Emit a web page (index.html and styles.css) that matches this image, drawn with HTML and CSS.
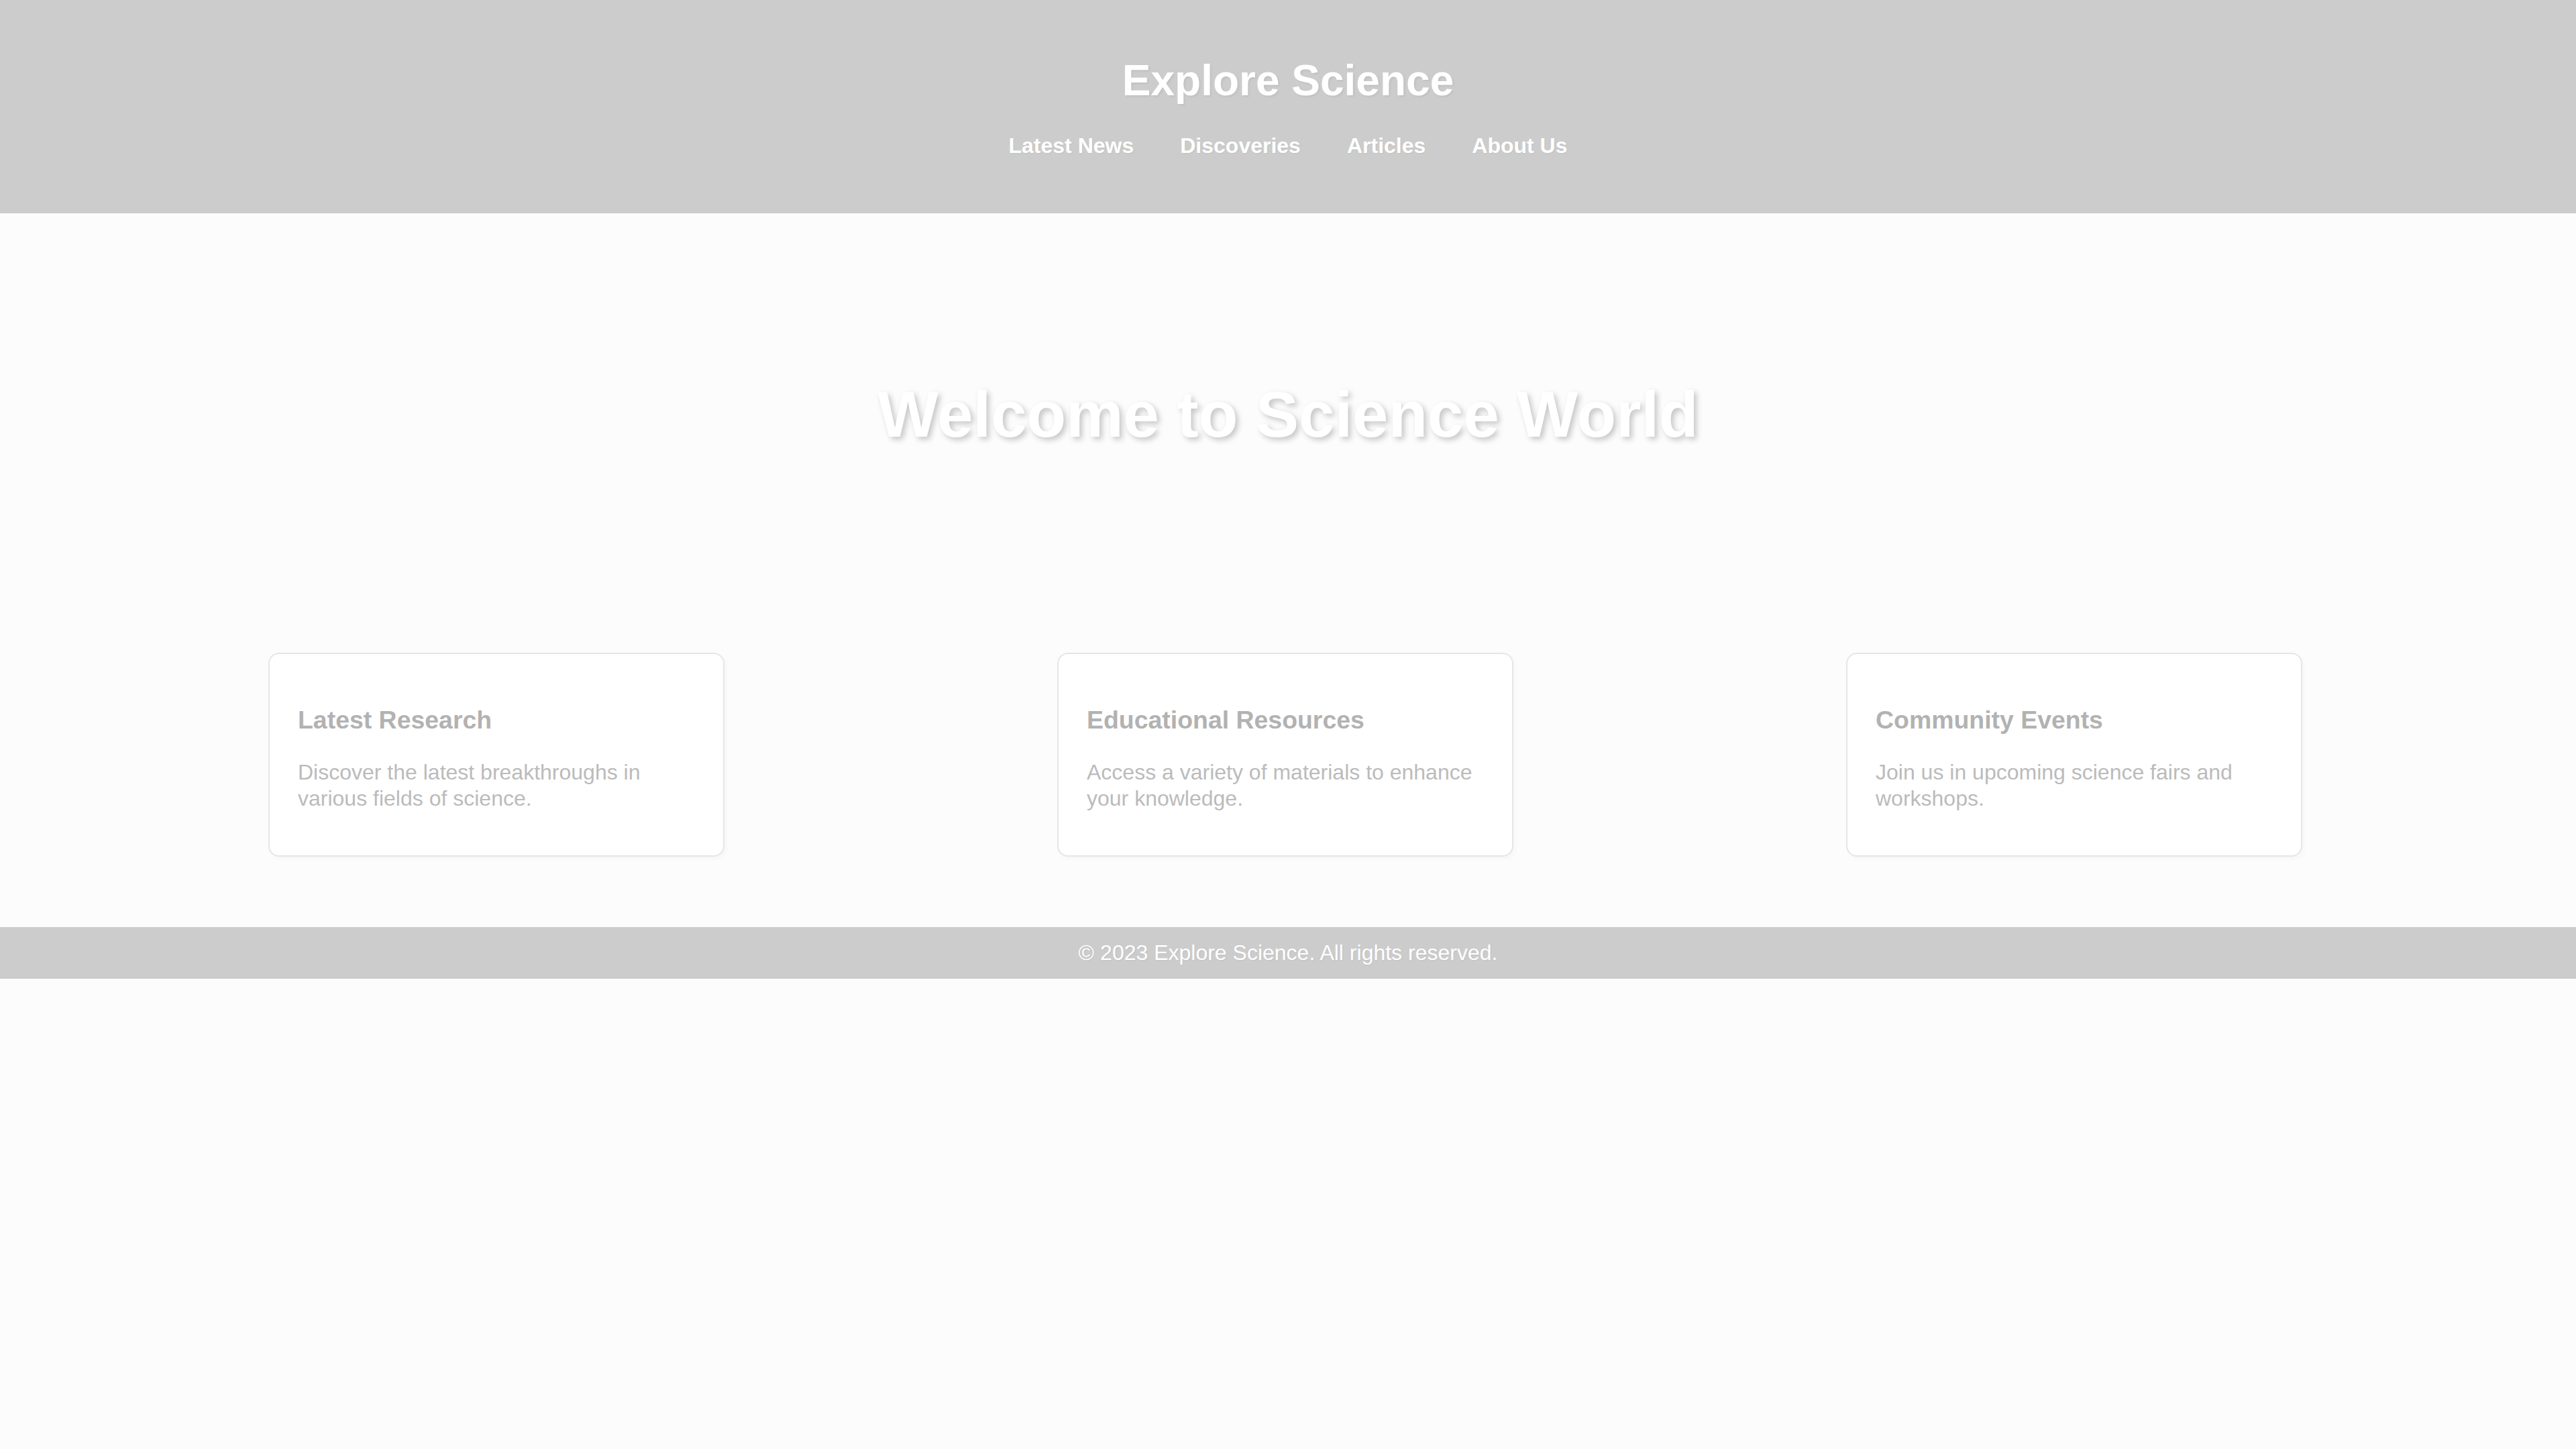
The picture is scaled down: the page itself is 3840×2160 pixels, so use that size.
FILE: index.html
```html
<!DOCTYPE html>
<html lang="en">
<head>
<meta charset="utf-8">
<title>Explore Science</title>
<link rel="stylesheet" href="styles.css">
</head>
<body>
<header class="site-header">
  <h1 class="site-title">Explore Science</h1>
  <nav class="site-nav">
    <ul class="nav-list">
      <li><a class="nav-link" href="#">Latest News</a></li>
      <li><a class="nav-link" href="#">Discoveries</a></li>
      <li><a class="nav-link" href="#">Articles</a></li>
      <li><a class="nav-link" href="#">About Us</a></li>
    </ul>
  </nav>
</header>
<main>
  <section class="hero">
    <h2 class="hero-title">Welcome to Science World</h2>
  </section>
  <section class="cards">
    <article class="card">
      <h3 class="card-title">Latest Research</h3>
      <p class="card-text">Discover the latest breakthroughs in various fields of science.</p>
    </article>
    <article class="card">
      <h3 class="card-title">Educational Resources</h3>
      <p class="card-text">Access a variety of materials to enhance your knowledge.</p>
    </article>
    <article class="card">
      <h3 class="card-title">Community Events</h3>
      <p class="card-text">Join us in upcoming science fairs and workshops.</p>
    </article>
  </section>
</main>
<footer class="site-footer">
  <p class="footer-text">&copy; 2023 Explore Science. All rights reserved.</p>
</footer>
</body>
</html>
```

FILE: styles.css
```css
html, body {
  margin: 0;
  padding: 0;
}

body {
  background: #fcfcfc;
  font-family: "Liberation Sans", Arial, sans-serif;
  font-size: 32px;
  color: #bbbbbb;
}

.site-header {
  background: #cccccc;
  padding: 40px 0 40px;
  text-align: center;
  color: #ffffff;
}

.site-title {
  margin: 43px 0 42px;
  font-size: 64px;
  font-weight: bold;
  line-height: normal;
  color: #ffffff;
  text-shadow: 2px 2px 3px rgba(0, 0, 0, 0.06);
}

.nav-list {
  list-style: none;
  margin: 0 0 42px;
  padding: 0;
  display: flex;
  justify-content: center;
  gap: 69px;
}

.nav-link {
  color: #ffffff;
  text-decoration: none;
  font-weight: bold;
  font-size: 32px;
  text-shadow: 1px 1px 2px rgba(0, 0, 0, 0.06);
}

.hero {
  padding: 245px 0 0;
  text-align: center;
}

.hero-title {
  margin: 0;
  font-size: 96px;
  font-weight: bold;
  line-height: normal;
  color: #ffffff;
  text-shadow: 4px 4px 8px rgba(0, 0, 0, 0.22);
}

.cards {
  display: flex;
  justify-content: flex-start;
  gap: 496px;
  padding: 0 0 0 400px;
  margin-top: 300px;
}

.card {
  box-sizing: border-box;
  width: 680px;
  height: 304px;
  background: #ffffff;
  border: 2px solid #e6e6e6;
  border-radius: 16px;
  padding: 42px 42px;
  box-shadow: 3px 4px 6px rgba(0, 0, 0, 0.025);
}

.card-title {
  margin: 35px 0 0;
  font-size: 37.44px;
  font-weight: bold;
  line-height: normal;
  color: #b2b2b2;
}

.card-text {
  margin: 37px 0 0;
  font-size: 32px;
  line-height: 39px;
  color: #bbbbbb;
}

.site-footer {
  background: #cccccc;
  margin-top: 105px;
  padding: 20px 0;
  text-align: center;
}

.footer-text {
  margin: 0;
  font-size: 32px;
  line-height: normal;
  color: #ffffff;
  text-shadow: 1px 1px 2px rgba(0, 0, 0, 0.06);
}
```
